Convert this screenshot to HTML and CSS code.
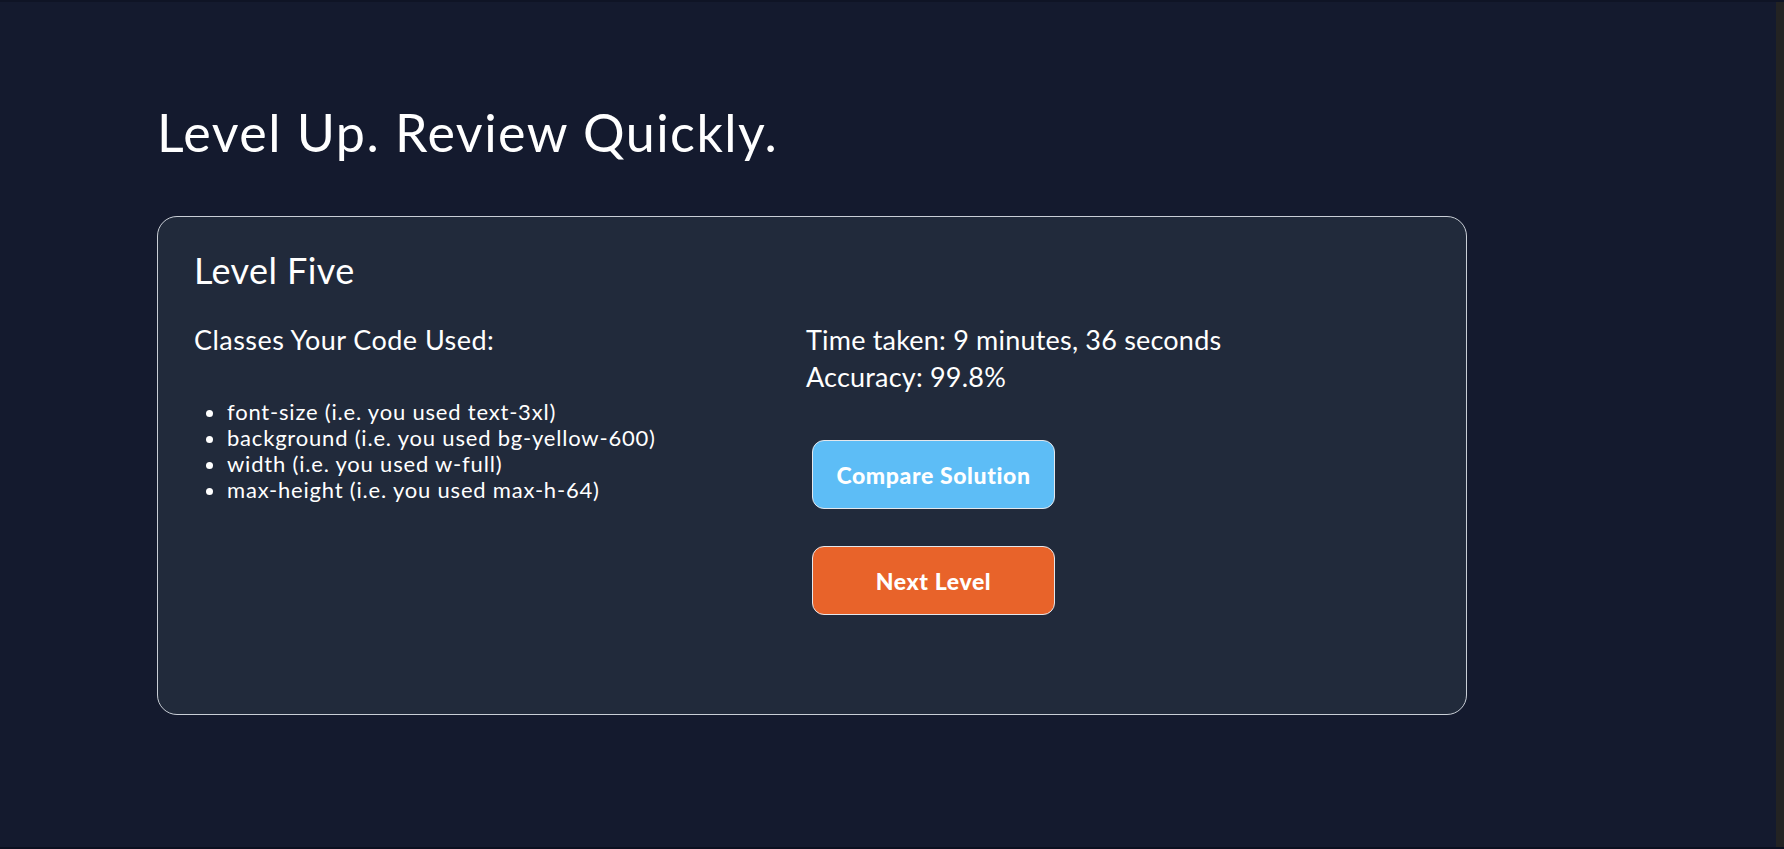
FILE: index.html
```html
<!DOCTYPE html>
<html lang="en">
<head>
<meta charset="utf-8">
<title>Level Up. Review Quickly.</title>
<link rel="stylesheet" href="styles.css">
</head>
<body>
<div class="app">
  <main class="page">
    <h1 class="title">Level Up. Review Quickly.</h1>
    <section class="card">
      <h2 class="card-title">Level Five</h2>
      <div class="columns">
        <div class="col">
          <p class="label">Classes Your Code Used:</p>
          <ul class="classes">
            <li>font-size (i.e. you used text-3xl)</li>
            <li>background (i.e. you used bg-yellow-600)</li>
            <li>width (i.e. you used w-full)</li>
            <li>max-height (i.e. you used max-h-64)</li>
          </ul>
        </div>
        <div class="col">
          <p class="stat">Time taken: 9 minutes, 36 seconds</p>
          <p class="stat">Accuracy: 99.8%</p>
          <div class="actions">
            <button class="btn btn-compare" type="button">Compare Solution</button>
            <button class="btn btn-next" type="button">Next Level</button>
          </div>
        </div>
      </div>
    </section>
  </main>
  <div class="scroll-track"></div>
</div>
</body>
</html>
```

FILE: styles.css
```css
* { box-sizing: border-box; }

html, body {
  margin: 0;
  padding: 0;
  height: 100%;
}

body {
  background: #141a2e;
  color: #ffffff;
  font-family: "Lato", "Noto Sans", sans-serif;
  overflow: hidden;
}

.app {
  display: flex;
  height: 849px;
  border-top: 2px solid #0f1425;
  border-bottom: 2px solid #0b1020;
}

.page {
  flex: 1;
  padding: 100px 0 0 157px;
}

.scroll-track {
  width: 8px;
  background: #232323;
}

.title {
  margin: 0;
  font-size: 52px;
  font-weight: 400;
  line-height: 60px;
  letter-spacing: 1.5px;
}

.card {
  margin-top: 54px;
  width: 1310px;
  height: 499px;
  background: #212a3b;
  border: 1px solid #c9ced6;
  border-radius: 20px;
  padding: 31px 36px;
}

.card-title {
  margin: 0;
  font-size: 36px;
  font-weight: 400;
  line-height: 44px;
  letter-spacing: 0.4px;
}

.columns {
  display: grid;
  grid-template-columns: 612px 1fr;
  margin-top: 30px;
}

.label,
.stat {
  margin: 0;
  font-size: 27px;
  line-height: 36px;
  letter-spacing: 0.45px;
}

.stat {
  letter-spacing: 0.2px;
}

.stat + .stat {
  line-height: 37px;
}

.classes {
  margin: 41px 0 0;
  padding-left: 33px;
  font-size: 22px;
  line-height: 26px;
  letter-spacing: 0.8px;
}

.actions {
  display: flex;
  flex-direction: column;
  align-items: flex-start;
  gap: 37px;
  margin: 45px 0 0 6px;
}

.btn {
  width: 243px;
  height: 69px;
  border: 1px solid #e4e7ec;
  border-radius: 12px;
  color: #ffffff;
  font-family: "Lato", "Noto Sans", sans-serif;
  font-weight: 900;
  font-size: 23px;
  letter-spacing: 0.6px;
  cursor: pointer;
}

.btn-compare { background: #5dbdf6; }
.btn-next { background: #e8632a; }
```
